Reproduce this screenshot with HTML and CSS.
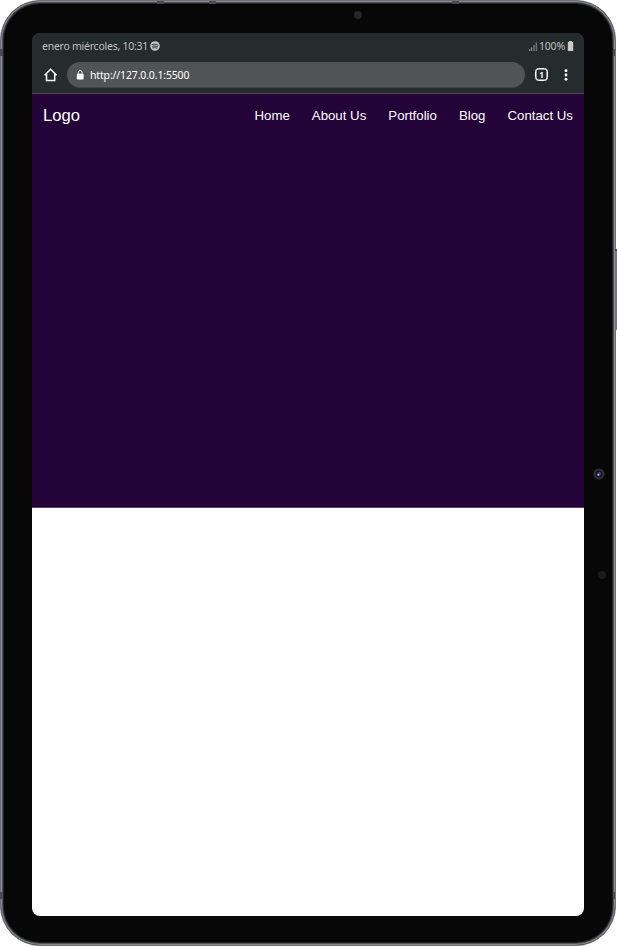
FILE: index.html
```html
<!DOCTYPE html>
<html lang="es">
<head>
<meta charset="utf-8">
<title>Logo</title>
<link rel="stylesheet" href="styles.css">
</head>
<body>
<div class="tablet">
  <div class="bezel">
    <div class="screen">
      <div class="browser">
        <div class="status">
          <span class="date">enero miércoles, 10:31</span>
          <svg class="music" width="10" height="10" viewBox="0 0 10 10"><circle cx="5" cy="5" r="4.8" fill="#c3c5c6"/><path d="M2 3.5Q5 2.6 8.1 4M2.4 5.2Q5 4.5 7.6 5.6M2.8 6.8Q5 6.2 7 7.1" fill="none" stroke="#30363a" stroke-width=".9" stroke-linecap="round"/></svg>
          <svg class="signal" width="9" height="9" viewBox="0 0 9 9"><path d="M.7 7v2M2.7 5.5V9" stroke="#a0a3a5" stroke-width="1"/><path d="M5 3v6M7.3.5V9" stroke="#767b7e" stroke-width="1.3"/></svg>
          <span class="percent">100%</span>
          <svg class="battery" width="7" height="10" viewBox="0 0 7 10"><path d="M2 0h3v1h1.2v9H.8V1H2z" fill="#c8cacb"/></svg>
        </div>
        <div class="toolbar">
          <svg class="home" width="14" height="14" viewBox="0 0 14 14"><path d="M.6 7.2 6.6 1.2l6 6M2.5 6v6.4h8.2V6" fill="none" stroke="#fff" stroke-width="1.5"/></svg>
          <div class="address">
            <svg width="8" height="10" viewBox="0 0 8 10"><rect x=".8" y="3.8" width="6.8" height="5.7" rx=".7" fill="#fff"/><path d="M2.4 4V2.4a1.8 1.8 0 0 1 3.6 0V4" fill="none" stroke="#fff"/></svg>
            <span class="url">http://127.0.0.1:5500</span>
          </div>
          <div class="tabs">1</div>
          <svg class="more" width="4" height="12" viewBox="0 0 4 12"><g fill="#fff"><circle cx="2" cy="1.7" r="1.45"/><circle cx="2" cy="6" r="1.45"/><circle cx="2" cy="10.3" r="1.45"/></g></svg>
        </div>
      </div>
      <header class="hero">
        <nav>
          <span class="logo">Logo</span>
          <ul><li>Home</li><li>About Us</li><li>Portfolio</li><li>Blog</li><li>Contact Us</li></ul>
        </nav>
      </header>
    </div>
  </div>
  <i class="mark top-a"></i><i class="mark top-b"></i><i class="mark top-c"></i>
  <i class="mark left-a"></i><i class="mark left-b"></i><i class="mark right-a"></i><i class="mark right-b"></i>
  <i class="sensor front"></i>
  <i class="sensor side"></i>
  <svg class="lens" width="12" height="12" viewBox="0 0 12 12"><circle cx="6" cy="6" r="5.6" fill="#303036"/><circle cx="6" cy="6" r="3.6" fill="#151525"/><circle cx="6" cy="6" r="2" fill="#30346e"/><circle cx="5.4" cy="6.8" r="1" fill="#c3c8e5"/><circle cx="7" cy="5" r=".6" fill="#8088b5"/></svg>
  <i class="button"></i>
</div>
</body>
</html>
```
FILE: styles.css
```css
* { box-sizing: border-box; }
body { margin: 0; background: #fff; overflow: hidden; }
.tablet {
  position: relative;
  width: 617px;
  height: 946px;
  padding-right: 1px;
}
.bezel {
  height: 946px;
  padding: 32px 31px 29px;
  background: #070707;
  border: 1px solid #707375;
  border-radius: 40px;
  box-shadow: inset 0 0 0 1px #85868b, inset 0 0 0 2px #55565b, inset 0 0 0 3px #202124;
}
.screen {
  width: 552px;
  height: 883px;
  overflow: hidden;
  background: linear-gradient(#262b2e 50%, #fff 50%);
  border-radius: 8px;
}
.browser {
  height: 61px;
  background: #262b2e;
  border-bottom: 1px solid #4c4a51;
}
.status {
  display: flex;
  align-items: center;
  height: 27px;
  padding: 0 10px 1px;
  color: #bec0c1;
  font: 10.5px/14px "Noto Sans", sans-serif;
}
.date { width: 106px; white-space: nowrap; letter-spacing: -.25px; }
.music { margin-left: 2px; }
.signal { margin-left: auto; margin-right: 1px; }
.percent { width: 27px; letter-spacing: -.2px; white-space: nowrap; }
.battery { margin-left: 1px; }
.toolbar {
  display: flex;
  align-items: center;
  height: 30px;
  padding-left: 12px;
}
.address {
  display: flex;
  align-items: center;
  width: 458px;
  height: 26px;
  margin-left: 9px;
  padding-left: 9px;
  background: #515457;
  border-bottom: 1px solid #414548;
  border-radius: 13px;
}
.url {
  margin-left: 6px;
  color: #fff;
  font: 10.5px/14px "Noto Sans", sans-serif;
  letter-spacing: -.15px;
  white-space: nowrap;
}
.tabs {
  width: 13px;
  height: 13px;
  margin: 0 0 1px 10px;
  border: 1px solid #fff;
  box-shadow: inset 0 0 0 .5px #fff;
  border-radius: 3.5px;
  color: #fff;
  font: bold 8px/11px "Noto Sans", sans-serif;
  text-align: center;
}
.more { margin: 0 0 1px 16px; }
.hero {
  height: 414px;
  background: #240339;
  border-bottom: 1px solid #5b416b;
  color: #fff;
  font-family: "Liberation Sans", Arial, sans-serif;
}
nav {
  display: flex;
  align-items: center;
  justify-content: space-between;
  height: 43px;
  padding: 0 11px;
}
.logo { font-size: 16.6px; }
ul {
  display: flex;
  gap: 22px;
  margin: 0;
  padding: 0;
  list-style: none;
  font-size: 13.25px;
}
.mark { position: absolute; background: #484a4e; }
.top-a, .top-b, .top-c { top: 1px; width: 7px; height: 3px; }
.top-a { left: 157px; }
.top-b { left: 209px; }
.top-c { left: 452px; }
.left-a, .left-b { left: 0; width: 3px; height: 7px; }
.right-a, .right-b { left: 613px; width: 2px; height: 7px; }
.left-a, .right-a { top: 49px; }
.left-b, .right-b { top: 892px; }
.sensor { position: absolute; width: 8px; height: 8px; border-radius: 50%; background: #1b1c1d; }
.front { left: 354px; top: 11px; background: #252627; }
.side { left: 598px; top: 571px; }
.lens { position: absolute; left: 593px; top: 468px; }
.button { position: absolute; left: 615px; top: 249px; width: 2px; height: 81px; background: #77777d; border-top: 2px solid #484a50; }
```
